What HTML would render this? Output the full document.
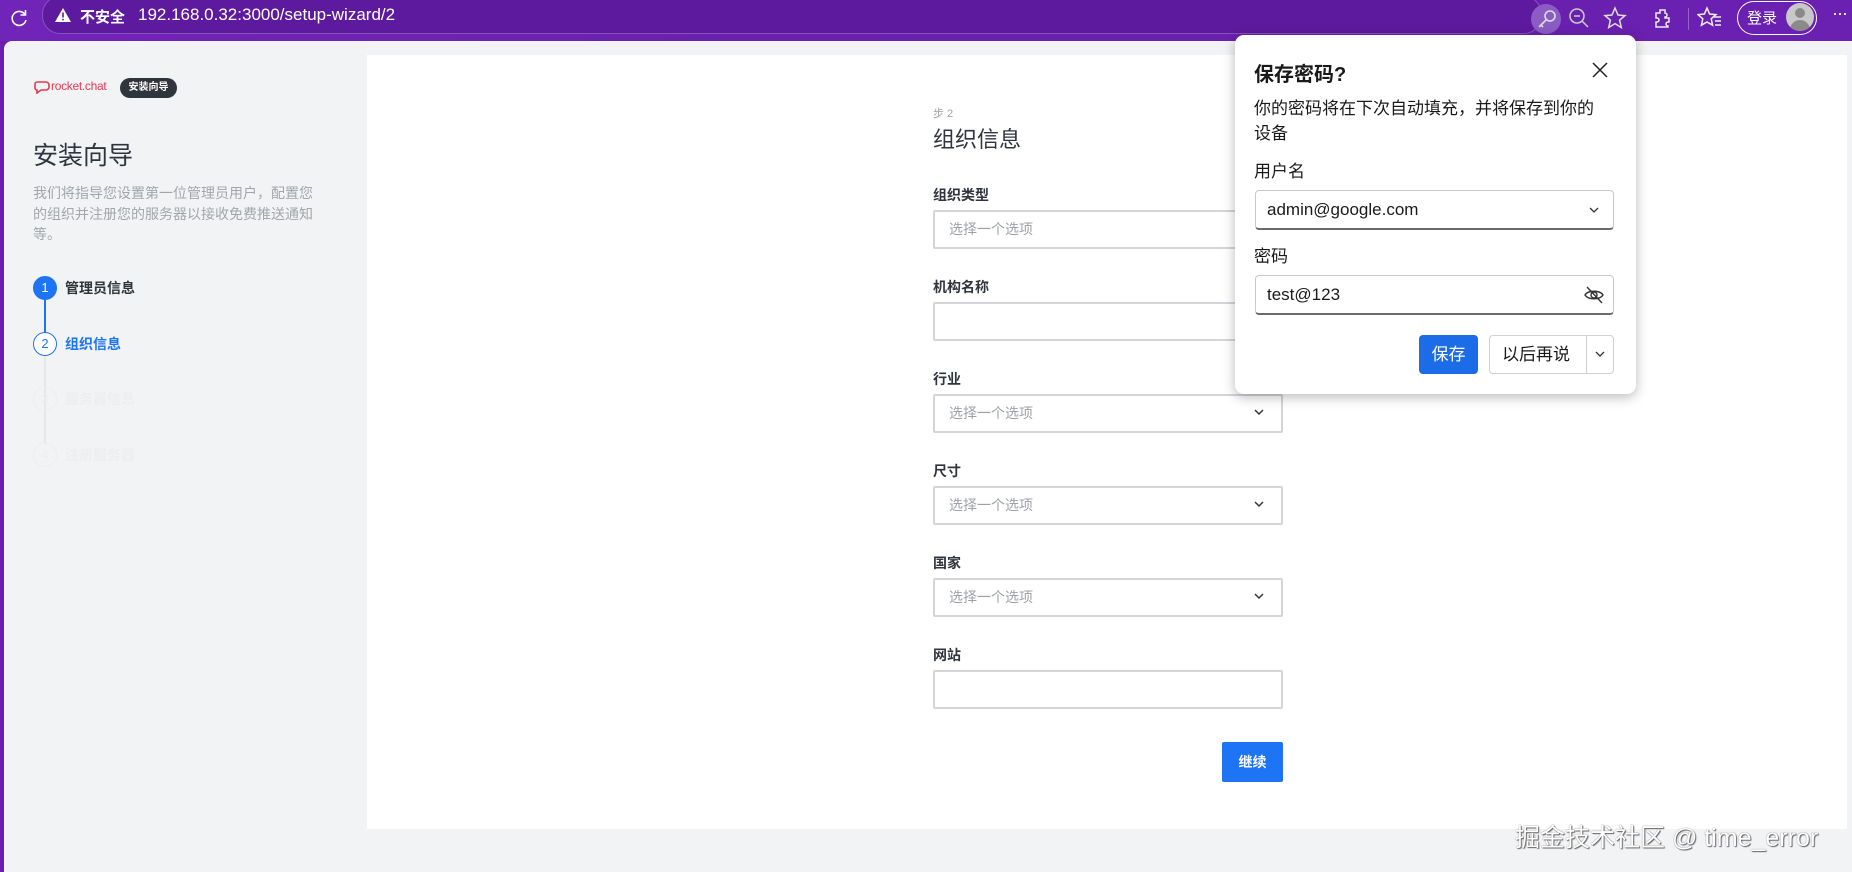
<!DOCTYPE html>
<html><head><meta charset="utf-8"><style>
*{box-sizing:border-box;margin:0;padding:0}
body{width:1852px;height:872px;overflow:hidden;background:#6a1fae;font-family:"Liberation Sans","Noto Sans CJK SC",sans-serif;position:relative}
.abs{position:absolute}
.top{left:0;top:0;width:1852px;height:41px;background:linear-gradient(90deg,#7124b8,#6a20ad 40%,#6a20b0)}
.addr{left:42px;top:-4px;width:1500px;height:38px;border:1.5px solid rgba(255,255,255,.25);border-radius:18px;background:#5d1a9e}
.content{left:4px;top:41px;width:1848px;height:831px;background:#f2f3f5;border-top-left-radius:8px}
.panel{left:367px;top:55px;width:1480px;height:774px;background:#fff}
.lbl{font-size:14px;color:#2f343d;font-weight:bold}
.inp{width:350px;height:39px;border:2px solid #d3d5d9;border-radius:2px;background:#fff;font-size:14px;color:#9ea2a8;padding-left:14px;line-height:35px}
.chev{position:absolute;right:16px;top:12px}
.pop{left:1235px;top:35px;width:401px;height:359px;background:#fff;border-radius:9px;box-shadow:0 3px 12px rgba(0,0,0,.28)}
.pin{position:absolute;left:20px;width:359px;height:40px;border:1px solid #c9c9c9;border-bottom:2px solid #6b6b6b;border-radius:4px;font-size:17px;color:#1a1a1a;padding-left:11px;line-height:37px}
.step{position:absolute;left:33px;width:24px;height:24px;border-radius:50%;font-size:13px;text-align:center;line-height:22px}
</style></head><body>
<div class="abs top"></div>
<div class="abs addr"></div>
<svg class="abs" style="left:8px;top:7px" width="22" height="22" viewBox="0 0 22 22"><path d="M17 7.5A7 7 0 1 0 18 13" fill="none" stroke="#fff" stroke-width="1.6"/><path d="M17.5 3v5h-5" fill="none" stroke="#fff" stroke-width="1.6"/></svg>
<svg class="abs" style="left:54px;top:7px" width="18" height="16" viewBox="0 0 18 16"><path d="M9 1L17 15H1Z" fill="#fff"/><rect x="8.2" y="5.5" width="1.6" height="5" fill="#5d1a9e"/><rect x="8.2" y="11.8" width="1.6" height="1.6" fill="#5d1a9e"/></svg>
<div class="abs" style="left:80px;top:6px;color:#fff;font-size:15px;font-weight:bold">不安全</div>
<div class="abs" style="left:138px;top:5px;color:#fff;font-size:17px">192.168.0.32:3000/setup-wizard/2</div>
<div class="abs" style="left:1531px;top:4px;width:30px;height:30px;border-radius:50%;background:#8b5cc4"></div>
<svg class="abs" style="left:1536px;top:8px" width="22" height="22" viewBox="0 0 22 22"><circle cx="14" cy="8" r="5" fill="none" stroke="#ddd" stroke-width="1.6"/><path d="M10 12L3 19M5 17l2 2" stroke="#ddd" stroke-width="1.6" fill="none"/></svg>
<svg class="abs" style="left:1568px;top:7px" width="22" height="22" viewBox="0 0 22 22"><circle cx="9" cy="9" r="7" fill="none" stroke="#ccc" stroke-width="1.5"/><path d="M6 9h6M14 14l6 6" stroke="#ccc" stroke-width="1.5"/></svg>
<svg class="abs" style="left:1603px;top:6px" width="24" height="24" viewBox="0 0 24 24"><path d="M12 2l3 7 7 .6-5.4 4.6 1.7 7.3L12 17.6 5.7 21.5l1.7-7.3L2 9.6 9 9z" fill="none" stroke="#ddd" stroke-width="1.5"/></svg>
<svg class="abs" style="left:1651px;top:6px" width="24" height="24" viewBox="0 0 24 24"><path d="M9 4h5v3a2 2 0 1 1 0 4v1h4v4h-1a2 2 0 1 0 0 4v1H5v-5h1a2 2 0 1 0 0-4H5V7h4z" fill="none" stroke="#eee" stroke-width="1.5"/></svg>
<div class="abs" style="left:1688px;top:8px;width:1px;height:22px;background:rgba(255,255,255,.3)"></div>
<svg class="abs" style="left:1697px;top:6px" width="26" height="24" viewBox="0 0 26 24"><path d="M10 2l2.6 6 6.4.6-4.8 4.2 1.4 6.4L10 16l-5.6 3.2 1.4-6.4L1 8.6 7.4 8z" fill="none" stroke="#eee" stroke-width="1.5"/><path d="M17 11h7M18 15h6M18 19h6" stroke="#eee" stroke-width="1.5"/></svg>
<div class="abs" style="left:1737px;top:1px;width:80px;height:34px;border:1.5px solid #fff;border-radius:17px"></div>
<div class="abs" style="left:1747px;top:7px;color:#fff;font-size:15px">登录</div>
<div class="abs" style="left:1786px;top:3px;width:28px;height:28px;border-radius:50%;background:#c8c8c8;overflow:hidden"><div style="position:absolute;left:9px;top:5px;width:10px;height:10px;border-radius:50%;background:#8a8a8a"></div><div style="position:absolute;left:4px;top:17px;width:20px;height:14px;border-radius:10px 10px 0 0;background:#8a8a8a"></div></div>
<div class="abs" style="left:1832px;top:3px;color:#fff;font-size:18px;letter-spacing:-1px">···</div>

<div class="abs content"></div>
<svg class="abs" style="left:34px;top:80px" width="16" height="14" viewBox="0 0 16 14"><path d="M3 2h9a3 3 0 0 1 3 3v2a3 3 0 0 1-3 3H7l-4 3v-3a2 2 0 0 1-2-2V4a2 2 0 0 1 2-2z" fill="none" stroke="#e53950" stroke-width="1.6"/></svg>
<div class="abs" style="left:51px;top:79px;font-size:12px;color:#e53950;letter-spacing:-0.3px">rocket.chat</div>
<div class="abs" style="left:120px;top:78px;width:57px;height:20px;border-radius:10px;background:#2f343d;color:#fff;font-size:10px;font-weight:bold;text-align:center;line-height:20px">安装向导</div>
<div class="abs" style="left:33px;top:136px;font-size:25px;color:#2f343d">安装向导</div>
<div class="abs" style="left:33px;top:183px;width:285px;font-size:14px;line-height:20.5px;color:#a2a6ab">我们将指导您设置第一位管理员用户，配置您的组织并注册您的服务器以接收免费推送通知等。</div>
<div class="abs" style="left:44px;top:298px;width:2px;height:36px;background:#1d74f5"></div>
<div class="abs" style="left:44px;top:355px;width:2px;height:88px;background:#e6e7e9"></div>
<div class="step" style="top:276px;background:#1d74f5;color:#fff;border:1px solid #1d74f5">1</div>
<div class="abs" style="left:65px;top:278px;font-size:14px;color:#2f343d;font-weight:bold">管理员信息</div>
<div class="step" style="top:332px;background:#fff;color:#1d74f5;border:1px solid #1d74f5">2</div>
<div class="abs" style="left:65px;top:334px;font-size:14px;color:#1d74f5;font-weight:bold">组织信息</div>
<div class="step" style="top:387px;border:1px solid #eceef0;color:#eceef0">3</div>
<div class="abs" style="left:65px;top:389px;font-size:14px;color:#eceef0;font-weight:bold">服务器信息</div>
<div class="step" style="top:443px;border:1px solid #eceef0;color:#eceef0">4</div>
<div class="abs" style="left:65px;top:445px;font-size:14px;color:#eceef0;font-weight:bold">注册服务器</div>

<div class="abs panel"></div>
<div class="abs" style="left:933px;top:105px;font-size:11px;color:#9ea2a8">步 2</div>
<div class="abs" style="left:933px;top:122px;font-size:22px;color:#2f343d">组织信息</div>
<div class="abs lbl" style="left:933px;top:185px">组织类型</div>
<div class="abs inp" style="left:933px;top:210px">选择一个选项</div>
<div class="abs lbl" style="left:933px;top:277px">机构名称</div>
<div class="abs inp" style="left:933px;top:302px"></div>
<div class="abs lbl" style="left:933px;top:369px">行业</div>
<div class="abs inp" style="left:933px;top:394px">选择一个选项<svg class="chev" width="12" height="8" viewBox="0 0 12 8"><path d="M2 2l4 4 4-4" fill="none" stroke="#2f343d" stroke-width="1.5"/></svg></div>
<div class="abs lbl" style="left:933px;top:461px">尺寸</div>
<div class="abs inp" style="left:933px;top:486px">选择一个选项<svg class="chev" width="12" height="8" viewBox="0 0 12 8"><path d="M2 2l4 4 4-4" fill="none" stroke="#2f343d" stroke-width="1.5"/></svg></div>
<div class="abs lbl" style="left:933px;top:553px">国家</div>
<div class="abs inp" style="left:933px;top:578px">选择一个选项<svg class="chev" width="12" height="8" viewBox="0 0 12 8"><path d="M2 2l4 4 4-4" fill="none" stroke="#2f343d" stroke-width="1.5"/></svg></div>
<div class="abs lbl" style="left:933px;top:645px">网站</div>
<div class="abs inp" style="left:933px;top:670px"></div>
<div class="abs" style="left:1222px;top:742px;width:61px;height:40px;background:#1d74f5;border-radius:2px;color:#fff;font-size:14px;font-weight:bold;text-align:center;line-height:40px">继续</div>

<div class="abs pop">
<div class="abs" style="left:19px;top:23px;font-size:20px;font-weight:bold;color:#1a1a1a">保存密码?</div>
<svg class="abs" style="left:357px;top:27px" width="16" height="16" viewBox="0 0 16 16"><path d="M1 1l14 14M15 1L1 15" stroke="#222" stroke-width="1.5"/></svg>
<div class="abs" style="left:19px;top:61px;width:360px;font-size:17px;line-height:25px;color:#1a1a1a">你的密码将在下次自动填充，并将保存到你的<br>设备</div>
<div class="abs" style="left:19px;top:122px;font-size:17px;color:#1a1a1a">用户名</div>
<div class="pin" style="top:155px">admin@google.com<svg style="position:absolute;right:14px;top:16px" width="10" height="7" viewBox="0 0 10 7"><path d="M1 1l4 4 4-4" fill="none" stroke="#333" stroke-width="1.3"/></svg></div>
<div class="abs" style="left:19px;top:207px;font-size:17px;color:#1a1a1a">密码</div>
<div class="pin" style="top:240px">test@123<svg style="position:absolute;right:8px;top:8px" width="22" height="22" viewBox="0 0 22 22"><path d="M2 11c3-5 15-5 18 0c-3 5-15 5-18 0z" fill="none" stroke="#333" stroke-width="1.4"/><circle cx="11" cy="11" r="3" fill="none" stroke="#333" stroke-width="1.4"/><path d="M4 3l15 16" stroke="#333" stroke-width="1.4"/></svg></div>
<div class="abs" style="left:184px;top:300px;width:59px;height:39px;background:#1b6ce6;border-radius:4px;color:#fff;font-size:17px;text-align:center;line-height:39px">保存</div>
<div class="abs" style="left:254px;top:300px;width:125px;height:39px;border:1px solid #d0d0d0;border-radius:4px;font-size:17px;line-height:37px;color:#1a1a1a;padding-left:12px">以后再说<div style="position:absolute;left:96px;top:0;width:1px;height:37px;background:#d0d0d0"></div><svg style="position:absolute;right:8px;top:15px" width="10" height="7" viewBox="0 0 10 7"><path d="M1 1l4 4 4-4" fill="none" stroke="#333" stroke-width="1.3"/></svg></div>
</div>

<div class="abs" style="left:1515px;top:818px;font-size:25px;color:#fff;text-shadow:0 0 1px #555,1px 1px 1px #666;white-space:nowrap">掘金技术社区 @ time_error</div>
</body></html>
